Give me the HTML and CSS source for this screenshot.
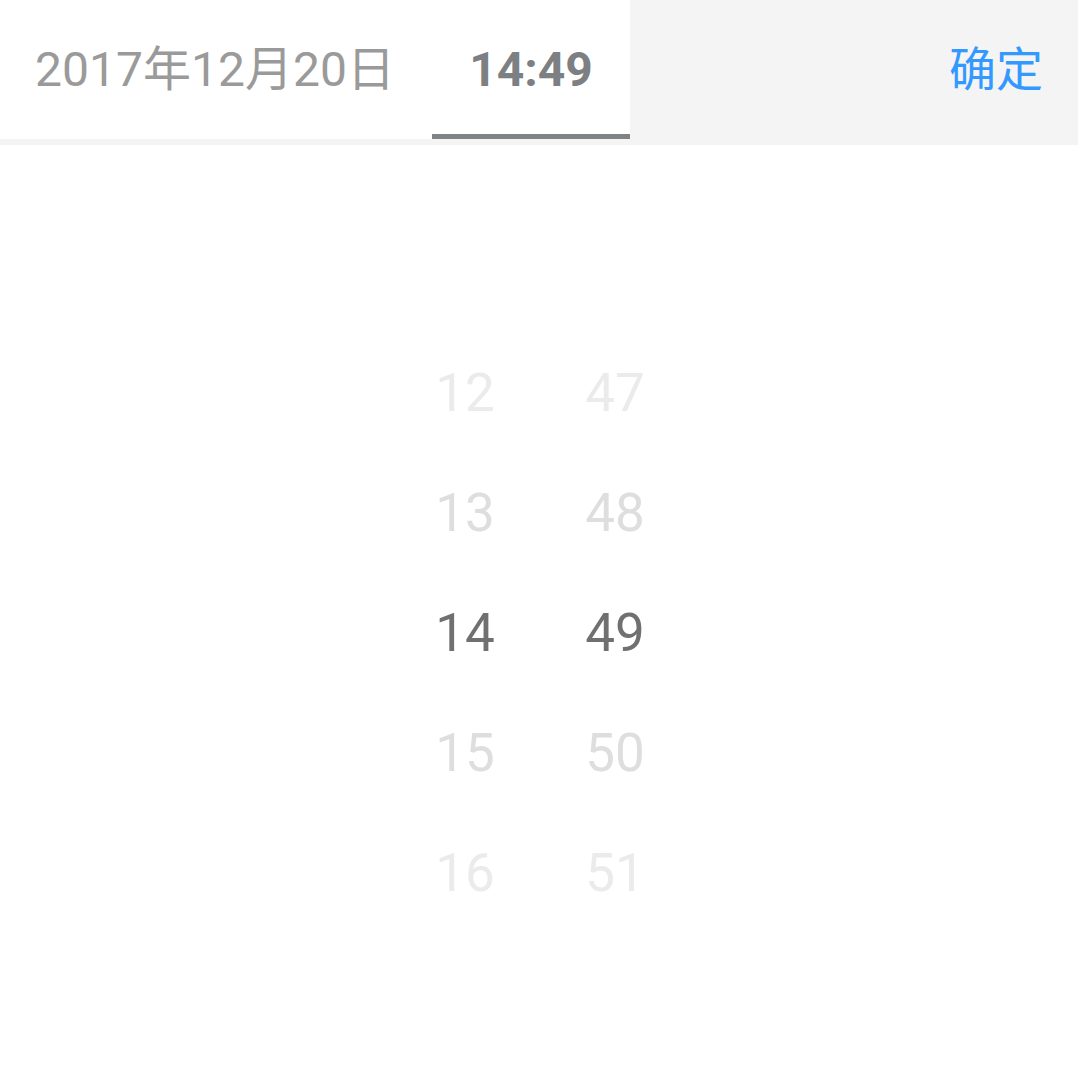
FILE: index.html
```html
<!DOCTYPE html>
<html lang="zh-CN">
<head>
<meta charset="utf-8">
<link rel="stylesheet" href="styles.css">
</head>
<body>
<div class="header">
  <div class="tabs">
    <div class="tab tab-date">2017年12月20日</div>
    <div class="tab tab-time active">14:49</div>
  </div>
  <div class="confirm">确定</div>
</div>
<div class="picker">
  <div class="col">
    <div class="item far">12</div>
    <div class="item near">13</div>
    <div class="item sel">14</div>
    <div class="item near">15</div>
    <div class="item far">16</div>
  </div>
  <div class="col">
    <div class="item far">47</div>
    <div class="item near">48</div>
    <div class="item sel">49</div>
    <div class="item near">50</div>
    <div class="item far">51</div>
  </div>
</div>
</body>
</html>
```
FILE: styles.css
```css
html, body {
  margin: 0;
  padding: 0;
  background: #ffffff;
  font-family: Roboto, "Noto Sans CJK SC", sans-serif;
}
.header {
  display: flex;
  height: 145px;
  background: #f4f4f4;
}
.tabs {
  display: flex;
  width: 630px;
  height: 139px;
  background: #ffffff;
}
.tab {
  display: flex;
  align-items: center;
  justify-content: center;
  box-sizing: border-box;
  height: 139px;
  line-height: 1;
}
.tab-date {
  width: 432px;
  padding-right: 2px;
  padding-bottom: 0;
  font-size: 48px;
  color: #9a9a9a;
}
.tab-time {
  width: 198px;
  font-size: 48px;
  font-weight: bold;
  color: #7c8083;
  border-bottom: 5px solid #7f8386;
  padding-top: 5px;
}
.confirm {
  flex: 1;
  display: flex;
  align-items: center;
  justify-content: flex-end;
  line-height: 1;
  padding-right: 35px;
  padding-bottom: 6px;
  font-size: 47px;
  color: #3399ff;
}
.picker {
  display: flex;
  justify-content: center;
  padding-top: 188px;
}
.col {
  width: 150px;
  display: flex;
  flex-direction: column;
  align-items: center;
}
.col:first-child {
  padding-left: 2px;
}
.item {
  height: 120px;
  line-height: 120px;
  font-size: 53px;
}
.far { color: #ebebeb; }
.near { color: #dedede; }
.sel { color: #707070; }
```
